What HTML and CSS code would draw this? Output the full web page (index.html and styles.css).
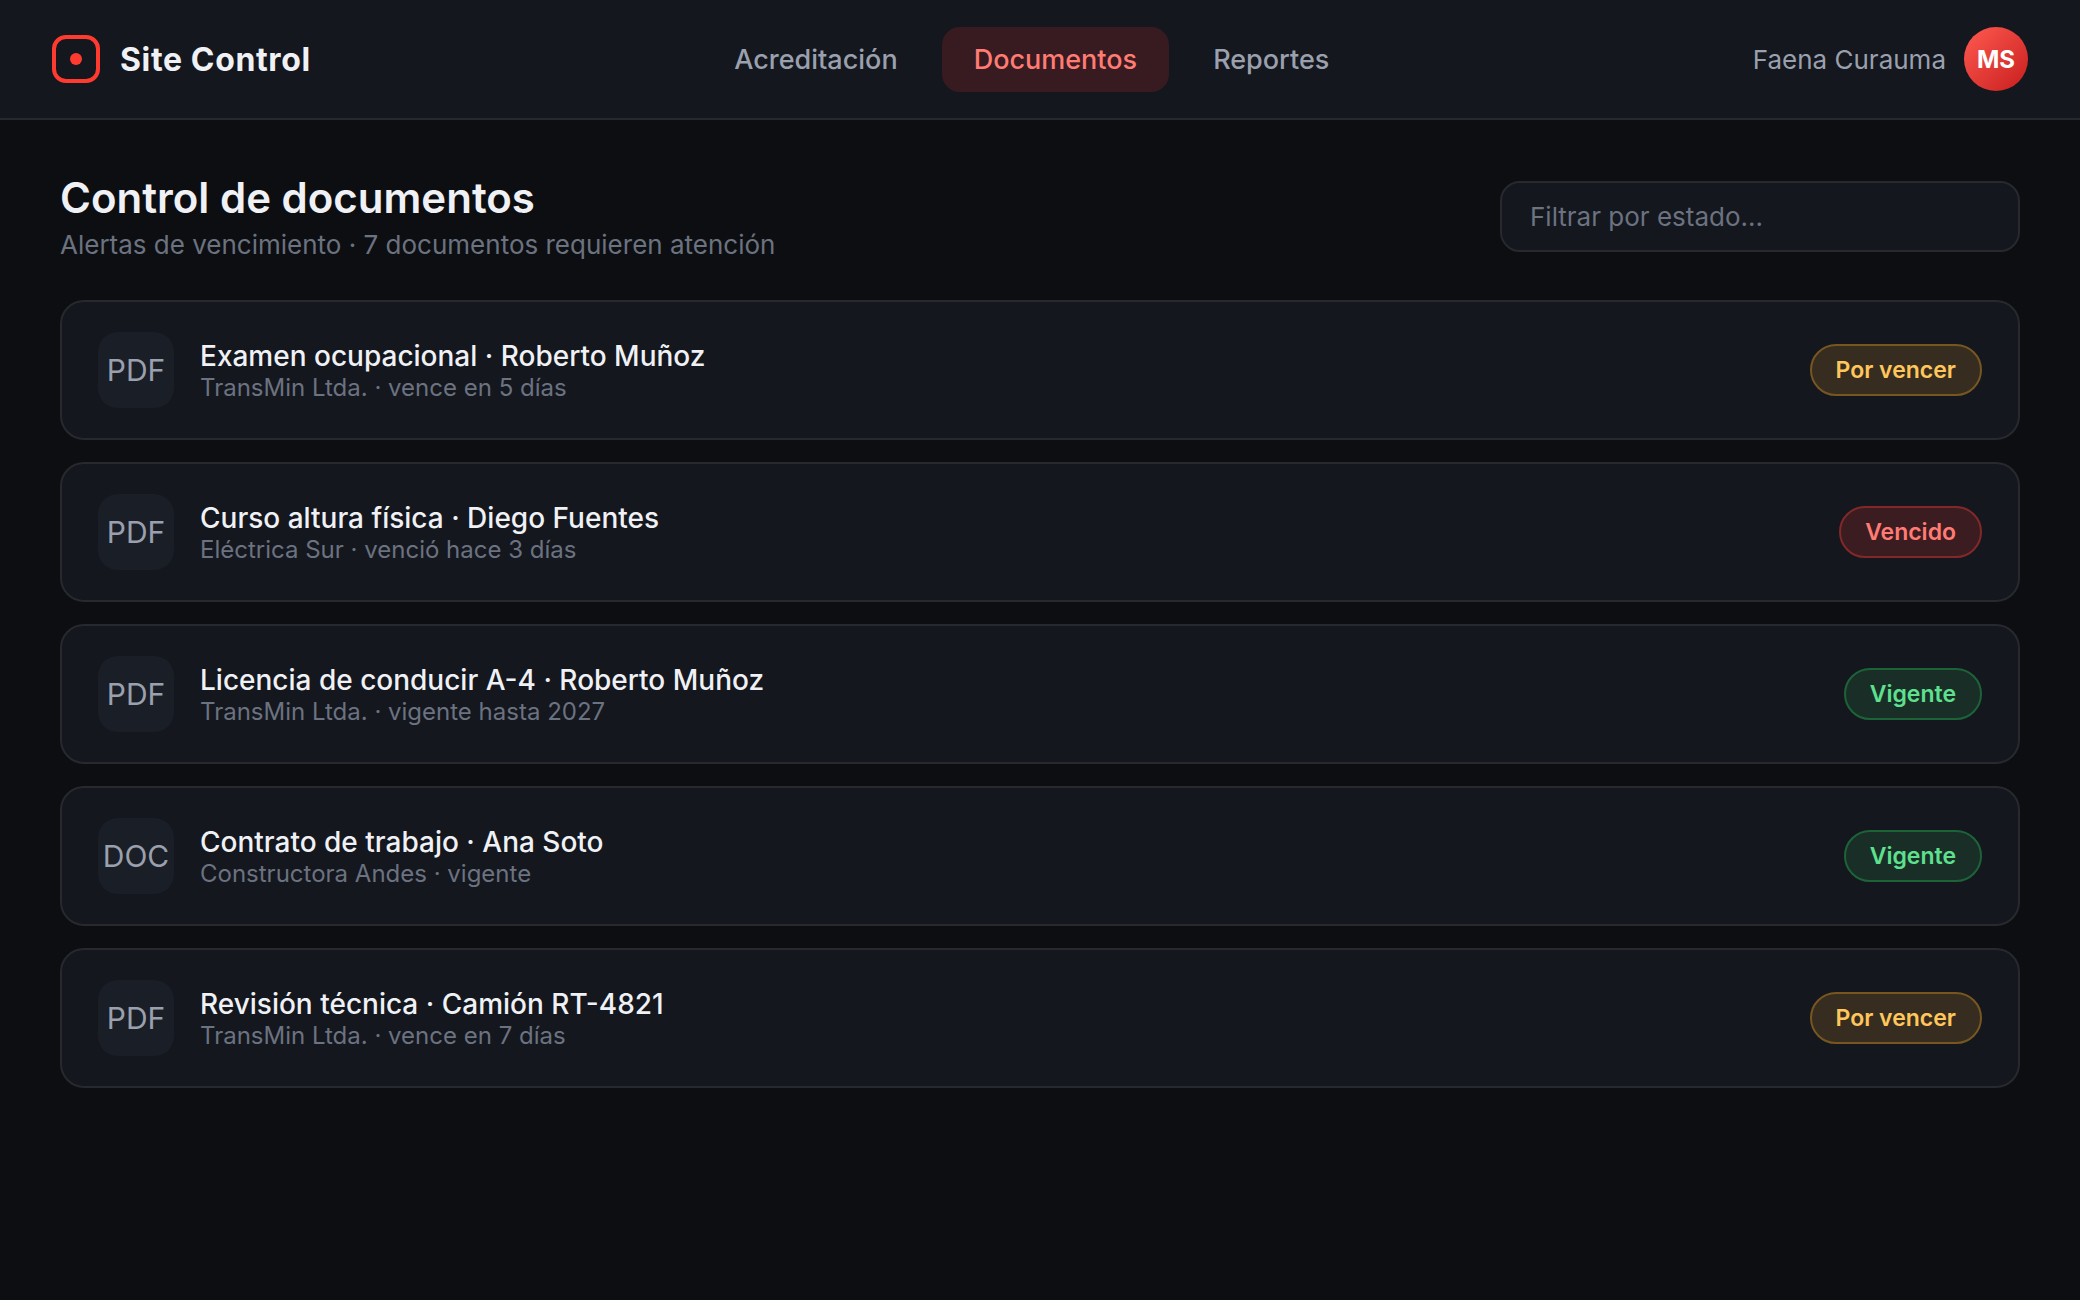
FILE: index.html
```html
<!DOCTYPE html>
<html lang="es">

<head>
    <meta charset="UTF-8">
    <title>Site Control</title>
    <link rel="stylesheet" href="styles.css">
</head>

<body>
    <header class="topbar">
        <div class="brand">
            <span class="logo"></span>
            <span class="brand-name">Site Control</span>
        </div>
        <nav class="nav">
            <a class="nav-item">Acreditación</a>
            <a class="nav-item active">Documentos</a>
            <a class="nav-item">Reportes</a>
        </nav>
        <div class="user">
            <span>Faena Curauma</span>
            <div class="avatar">MS</div>
        </div>
    </header>

    <main class="content">
        <div class="page-head">
            <div>
                <h1>Control de documentos</h1>
                <p class="subtitle">Alertas de vencimiento · 7 documentos requieren atención</p>
            </div>
            <input class="filter" type="text" placeholder="Filtrar por estado...">
        </div>

        <div class="doc-list">
            <div class="doc">
                <div class="doc-type">PDF</div>
                <div class="doc-info">
                    <div class="doc-title">Examen ocupacional · Roberto Muñoz</div>
                    <div class="doc-meta">TransMin Ltda. · vence en 5 días</div>
                </div>
                <span class="badge warn">Por vencer</span>
            </div>
            <div class="doc">
                <div class="doc-type">PDF</div>
                <div class="doc-info">
                    <div class="doc-title">Curso altura física · Diego Fuentes</div>
                    <div class="doc-meta">Eléctrica Sur · venció hace 3 días</div>
                </div>
                <span class="badge bad">Vencido</span>
            </div>
            <div class="doc">
                <div class="doc-type">PDF</div>
                <div class="doc-info">
                    <div class="doc-title">Licencia de conducir A-4 · Roberto Muñoz</div>
                    <div class="doc-meta">TransMin Ltda. · vigente hasta 2027</div>
                </div>
                <span class="badge ok">Vigente</span>
            </div>
            <div class="doc">
                <div class="doc-type">DOC</div>
                <div class="doc-info">
                    <div class="doc-title">Contrato de trabajo · Ana Soto</div>
                    <div class="doc-meta">Constructora Andes · vigente</div>
                </div>
                <span class="badge ok">Vigente</span>
            </div>
            <div class="doc">
                <div class="doc-type">PDF</div>
                <div class="doc-info">
                    <div class="doc-title">Revisión técnica · Camión RT-4821</div>
                    <div class="doc-meta">TransMin Ltda. · vence en 7 días</div>
                </div>
                <span class="badge warn">Por vencer</span>
            </div>
        </div>
    </main>
</body>
</html>
```

FILE: styles.css
```css
* {
    box-sizing: border-box;
    margin: 0;
    padding: 0;
}

body {
    background: #0d0e11;
    color: #f0f1f5;
    font-family: Inter, sans-serif;
    height: 100vh;
    overflow: hidden;
}

/* barra superior */
.topbar {
    display: flex;
    align-items: center;
    justify-content: space-between;
    height: 120px;
    padding: 0 52px;
    background: #14171e;
    border-bottom: 2px solid #27292f;
}

.brand {
    display: flex;
    align-items: center;
    gap: 20px;
}

.logo {
    display: flex;
    align-items: center;
    justify-content: center;
    width: 48px;
    height: 48px;
    border: 4px solid #ff3b30;
    border-radius: 14px;
}

.logo::after {
    content: "";
    width: 12px;
    height: 12px;
    border-radius: 50%;
    background: #ff3b30;
}

.brand-name {
    font-size: 32px;
    font-weight: 700;
    letter-spacing: 0.64px;
}

.nav {
    display: flex;
    gap: 12px;
}

.nav-item {
    padding: 16px 32px;
    border-radius: 18px;
    color: #9aa0ad;
    font-size: 27px;
    font-weight: 500;
}

.nav-item.active {
    background: #381b20;
    color: #ff7b74;
}

.user {
    display: flex;
    align-items: center;
    gap: 18px;
    color: #9aa0ad;
    font-size: 26px;
}

.avatar {
    display: flex;
    align-items: center;
    justify-content: center;
    width: 64px;
    height: 64px;
    border-radius: 50%;
    background: linear-gradient(135deg, #ff5a50, #c81e1e);
    color: #fff;
    font-size: 24px;
    font-weight: 700;
}

/* encabezado de la página */
.content {
    padding: 52px 60px;
}

.page-head {
    display: flex;
    align-items: center;
    justify-content: space-between;
    margin-bottom: 39px;
}

h1 {
    font-size: 42px;
    font-weight: 600;
    line-height: 51px;
}

.subtitle {
    margin-top: 6px;
    color: #6b7280;
    font-size: 26px;
    line-height: 32px;
}

.filter {
    width: 520px;
    height: 71px;
    padding: 0 28px;
    background: #14171e;
    border: 2px solid #27292f;
    border-radius: 20px;
    font-family: inherit;
    font-size: 26px;
    color: #f0f1f5;
}

.filter::placeholder {
    color: #6b7280;
}

/* listado */
.doc-list {
    display: flex;
    flex-direction: column;
    gap: 22px;
}

.doc {
    display: flex;
    align-items: center;
    gap: 26px;
    padding: 30px 36px;
    background: #14171e;
    border: 2px solid #27292f;
    border-radius: 24px;
}

.doc-type {
    display: flex;
    align-items: center;
    justify-content: center;
    width: 76px;
    height: 76px;
    border-radius: 20px;
    background: #1a1e26;
    color: #9aa0ad;
    font-size: 30px;
}

.doc-info {
    flex: 1;
}

.doc-title {
    font-size: 28px;
    font-weight: 500;
    line-height: 34px;
}

.doc-meta {
    color: #6b7280;
    font-size: 24px;
    line-height: 29px;
}

.badge {
    padding: 10px 24px;
    border: 2px solid;
    border-radius: 26px;
    font-size: 23px;
    font-weight: 600;
    line-height: 28px;
}

.warn {
    background: #362d20;
    border-color: #77561f;
    color: #ffc65c;
}

.bad {
    background: #3b1c20;
    border-color: #832829;
    color: #ff7b74;
}

.ok {
    background: #182e27;
    border-color: #1d6338;
    color: #5fe08e;
}
```
